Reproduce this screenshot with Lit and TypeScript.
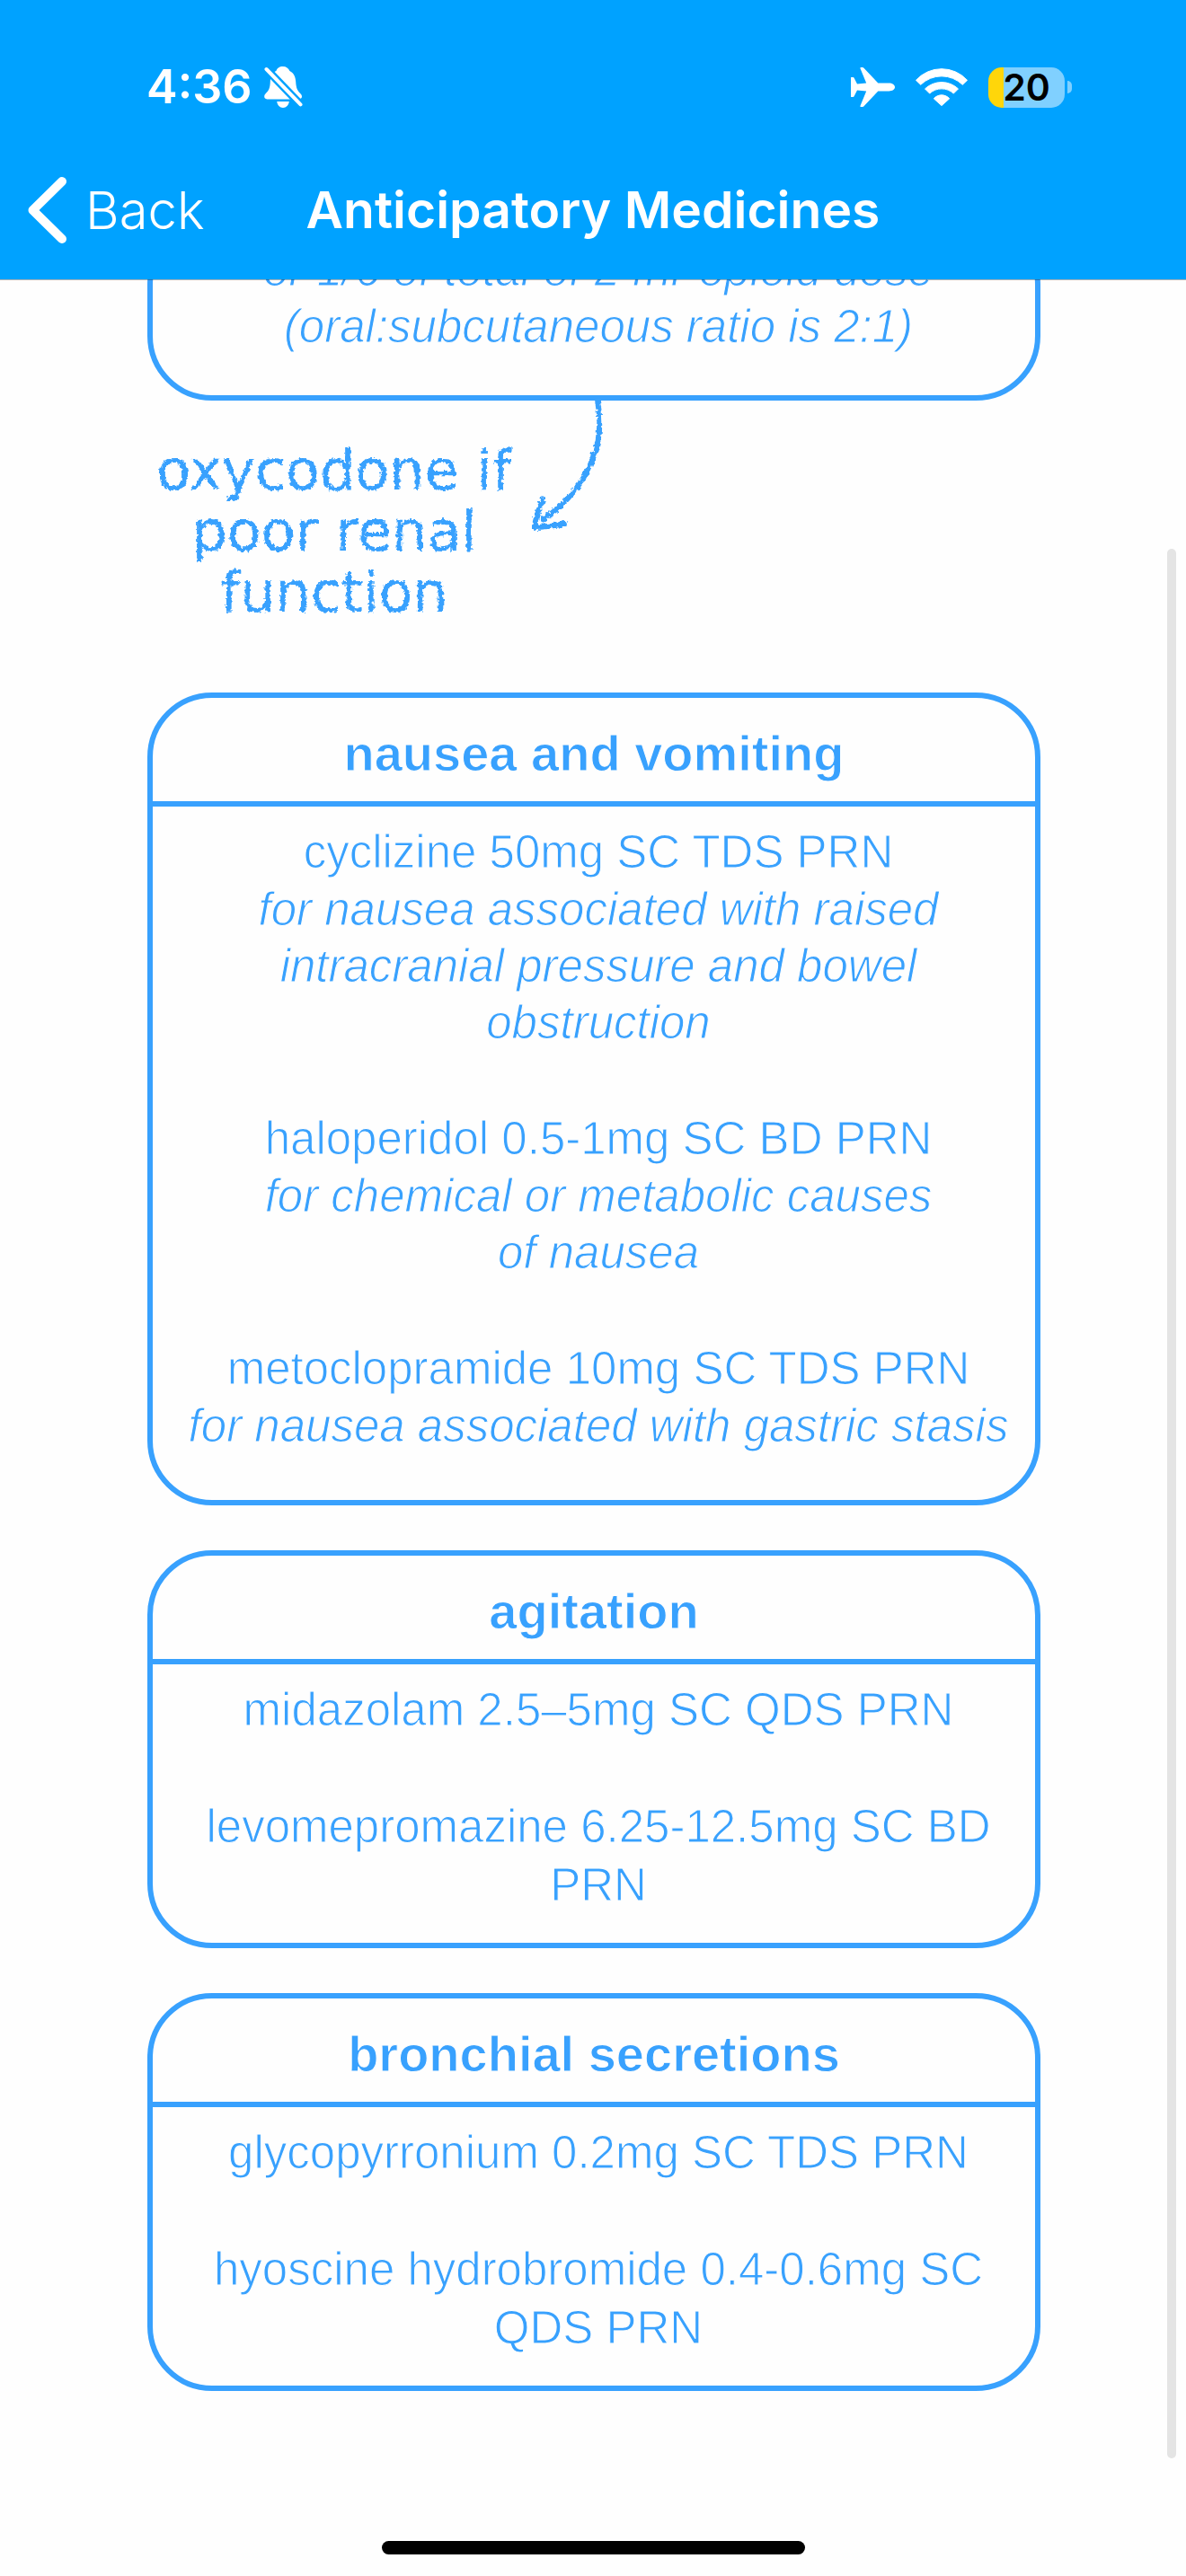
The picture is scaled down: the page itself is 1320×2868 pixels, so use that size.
import { LitElement, html, css, svg } from "lit";
import { customElement, property } from "lit/decorators.js";

interface Entry {
  drug?: string;
  lines?: string[];
}

interface Group {
  title: string;
  roomy?: boolean;
  entries: Entry[];
}

const GROUPS: Group[] = [
  {
    title: "nausea and vomiting",
    roomy: true,
    entries: [
      {
        drug: "cyclizine 50mg SC TDS PRN",
        lines: ["for nausea associated with raised intracranial pressure and bowel obstruction"],
      },
      {
        drug: "haloperidol 0.5-1mg SC BD PRN",
        lines: ["for chemical or metabolic causes", "of nausea"],
      },
      {
        drug: "metoclopramide 10mg SC TDS PRN",
        lines: ["for nausea associated with gastric stasis"],
      },
    ],
  },
  {
    title: "agitation",
    entries: [
      { drug: "midazolam 2.5–5mg SC QDS PRN" },
      { drug: "levomepromazine 6.25-12.5mg SC BD PRN" },
    ],
  },
  {
    title: "bronchial secretions",
    entries: [
      { drug: "glycopyrronium 0.2mg SC TDS PRN" },
      { drug: "hyoscine hydrobromide 0.4-0.6mg SC QDS PRN" },
    ],
  },
];

@customElement("status-bar")
export class StatusBar extends LitElement {
  static styles = css`
    :host {
      display: flex;
      align-items: center;
      justify-content: space-between;
      height: 194px;
      padding: 0 127px 0 163px;
      color: #fff;
      font-family: Inter, "Liberation Sans", sans-serif;
    }
    .group {
      display: flex;
      align-items: center;
    }
    .left {
      gap: 13px;
    }
    .right {
      gap: 23px;
    }
    .time {
      font-size: 52px;
      font-weight: 600;
      line-height: 64px;
    }
    .battery {
      display: flex;
      align-items: center;
      gap: 3px;
    }
    .cell {
      width: 85px;
      height: 45px;
      border-radius: 15px;
      background: linear-gradient(to right, #ffd60a 17px, #80d0ff 17px);
      color: #000;
      font-size: 41px;
      font-weight: 600;
      line-height: 45px;
      text-align: center;
    }
    .nub {
      width: 5px;
      height: 14px;
      border-radius: 0 5px 5px 0;
      background: #80d0ff;
    }
    svg {
      display: block;
    }
  `;

  render() {
    return html`
      <div class="group left">
        <span class="time">4:36</span>
        <svg width="43" height="46" viewBox="0 0 43 46" aria-label="Silent mode" role="img">
          <path
            fill="#fff"
            d="M20.8 0C17 0 14.200 2 13.400 5 8.800 7 7 11.500 6.800 17 6.600 24.500 4.800 27 2 29.800 .8 31 .2 32.300 .2 33.600 .2 35.400 1.400 36.400 3.200 36.400H38.600C40.600 36.400 42 35.400 42 33.600 42 32.200 41.200 31 40 29.800 37 27 35.600 24 35.200 17 34.800 11 33 7.500 28.400 5 27.200 2 24.600 0 20.800 0ZM14.200 39H27.800C27.300 43 24.600 46 21 46 17.400 46 14.700 43 14.200 39Z"
          />
          <path d="M-2 -1.700 45 47" stroke="#00a2ff" stroke-width="9" />
          <path d="M2.500 3 40.500 42.400" stroke="#fff" stroke-width="4" stroke-linecap="round" />
        </svg>
      </div>
      <div class="group right">
        <svg width="49" height="44" viewBox="0 0 49 44" aria-label="Airplane mode" role="img">
          <path
            fill="#fff"
            d="M0 11.500C0 11 .4 11 1 11H2C3 11 3.300 11.300 3.700 12L7 18.400 17.200 17.600 10.600 1.600C10.200 .6 10.500 0 11.400 0H12.600C13.600 0 14.200 .4 14.700 1.100L30.300 17.600H42.500C46 17.600 49 19.500 49 22 49 24.500 46 26.400 42.500 26.400H30.300L14.700 42.900C14.200 43.600 13.600 44 12.600 44H11.400C10.500 44 10.200 43.400 10.600 42.400L17.200 26.400 7 25.600 3.700 32C3.300 32.700 3 33 2 33H1C.4 33 0 33 0 32.500V11.500Z"
          />
        </svg>
        <svg width="58" height="42" viewBox="0 0 58 42" aria-label="Wi-Fi" role="img">
          <g fill="#fff" stroke="#fff" stroke-width="1" stroke-linejoin="round">
            <path d="M.5 13.300A38.500 38.500 0 0 1 57.500 13.300L52.300 18.300A33.500 33.500 0 0 0 5.700 18.300Z" />
            <path d="M10.500 22.900A27 27 0 0 1 47.500 22.900L42.300 28.100A19.500 19.500 0 0 0 15.700 28.100Z" />
            <path d="M20.300 33.800A11.500 11.500 0 0 1 37.700 33.800L29 41.600Z" />
          </g>
        </svg>
        <div class="battery">
          <div class="cell">20</div>
          <div class="nub"></div>
        </div>
      </div>
    `;
  }
}

@customElement("nav-bar")
export class NavBar extends LitElement {
  @property() heading = "";

  static styles = css`
    :host {
      display: grid;
      grid-template-columns: 1fr auto 1fr;
      align-items: center;
      height: 80px;
      padding: 0 30px 37px;
      color: #fff;
      font-family: Inter, "Liberation Sans", sans-serif;
    }
    .back {
      display: flex;
      align-items: center;
      gap: 21px;
      justify-self: start;
      padding: 0;
      border: 0;
      background: none;
      color: inherit;
      font: inherit;
      font-size: 58px;
      font-weight: 300;
      line-height: 72px;
    }
    .heading {
      margin: 0;
      font-size: 57px;
      font-weight: 600;
      line-height: 72px;
    }
    svg {
      display: block;
    }
  `;

  render() {
    return html`
      <button class="back" type="button">
        <svg width="44" height="74" viewBox="0 0 44 74" aria-hidden="true">
          <path
            d="M39 5 6.500 37 39 69"
            fill="none"
            stroke="#fff"
            stroke-width="10"
            stroke-linecap="round"
            stroke-linejoin="round"
          />
        </svg>
        Back
      </button>
      <h1 class="heading">${this.heading}</h1>
    `;
  }
}

@customElement("app-root")
export class AppRoot extends LitElement {
  static styles = css`
    :host {
      --ink: #38a1fe;
      --paper: #fefefe;
      display: flex;
      flex-direction: column;
      position: relative;
      min-height: 100vh;
      background: var(--paper);
      color: var(--ink);
      font-family: "Liberation Sans", Arial, sans-serif;
    }
    .header {
      position: relative;
      z-index: 1;
      background: #00a2ff;
      box-shadow: 0 1px 0 rgba(0, 0, 0, 0.3);
    }
    .content {
      flex: 1;
      overflow: hidden;
      padding: 0 162px 0 164px;
    }
    .card {
      border: 6px solid var(--ink);
      border-radius: 72px;
      text-align: center;
    }
    .card + .card {
      margin-top: 50px;
    }
    .card.scrolled {
      margin-top: -66px;
    }
    .title {
      margin: 0;
      padding: 29px 0 20px;
      border-bottom: 6px solid var(--ink);
      font-size: 56px;
      font-weight: 700;
      line-height: 66px;
      -webkit-text-stroke: 1px var(--paper);
    }
    .body {
      padding: 18px 18px 32px 28px;
      font-size: 51px;
      -webkit-text-stroke: 1px var(--paper);
    }
    .roomy .body {
      padding-bottom: 51px;
    }
    .scrolled .body {
      padding-bottom: 45px;
    }
    .entry + .entry {
      margin-top: 65px;
    }
    .drug,
    .note {
      margin: 0;
    }
    .drug {
      line-height: 65px;
    }
    .note {
      font-style: italic;
      line-height: 63px;
    }
    .aside {
      display: grid;
      grid-template-columns: 416px 110px;
      height: 325px;
    }
    .remark {
      margin: 0;
      padding-top: 44px;
      font-family: "DejaVu Sans", sans-serif;
      font-size: 62px;
      line-height: 68px;
      text-align: center;
      filter: url(#chalk);
    }
    .arrow {
      display: block;
    }
    .defs {
      position: absolute;
      width: 0;
      height: 0;
    }
    .scrollbar {
      position: absolute;
      top: 611px;
      right: 11px;
      bottom: 131px;
      width: 10px;
      border-radius: 5px;
      background: #e4e4e4;
    }
    .footer {
      display: flex;
      justify-content: center;
      padding-bottom: 24px;
    }
    .home {
      width: 471px;
      height: 15px;
      border-radius: 8px;
      background: #000;
    }
  `;

  private renderNote(lines: string[]) {
    return lines.map((line) => html`<p class="note">${line}</p>`);
  }

  private renderGroup(group: Group) {
    return html`
      <section class="card ${group.roomy ? "roomy" : ""}">
        <h2 class="title">${group.title}</h2>
        <div class="body">
          ${group.entries.map(
            (entry) => html`
              <div class="entry">
                <p class="drug">${entry.drug}</p>
                ${this.renderNote(entry.lines ?? [])}
              </div>
            `
          )}
        </div>
      </section>
    `;
  }

  private renderArrow() {
    const strokes = [
      "M85 0C90 26 86 50 80 64C69 94 48 116 25 132",
      "M24 110C20 120 16 130 15 140",
      "M15 141C26 141 38 139 49 137",
    ];
    return html`
      <svg class="arrow" width="110" height="160" viewBox="0 0 110 160" aria-hidden="true">
        <g fill="none" stroke="#38a1fe" stroke-width="6" stroke-linecap="round" filter="url(#chalk)">
          ${strokes.map((d) => svg`<path d=${d} />`)}
        </g>
      </svg>
    `;
  }

  render() {
    return html`
      <svg class="defs" aria-hidden="true">
        <filter id="chalk" x="-5%" y="-5%" width="110%" height="110%">
          <feTurbulence type="fractalNoise" baseFrequency="0.25" numOctaves="2" seed="4" result="grain" />
          <feDisplacementMap in="SourceGraphic" in2="grain" scale="6" xChannelSelector="R" yChannelSelector="G" />
        </filter>
      </svg>
      <header class="header">
        <status-bar></status-bar>
        <nav-bar heading="Anticipatory Medicines"></nav-bar>
      </header>
      <main class="content">
        <section class="card scrolled">
          <div class="body">
            ${this.renderNote(["or 1/6 of total of 24hr opioid dose", "(oral:subcutaneous ratio is 2:1)"])}
          </div>
        </section>
        <div class="aside">
          <p class="remark">oxycodone if<br />poor renal<br />function</p>
          ${this.renderArrow()}
        </div>
        ${GROUPS.map((group) => this.renderGroup(group))}
      </main>
      <footer class="footer"><div class="home"></div></footer>
      <div class="scrollbar"></div>
    `;
  }
}
